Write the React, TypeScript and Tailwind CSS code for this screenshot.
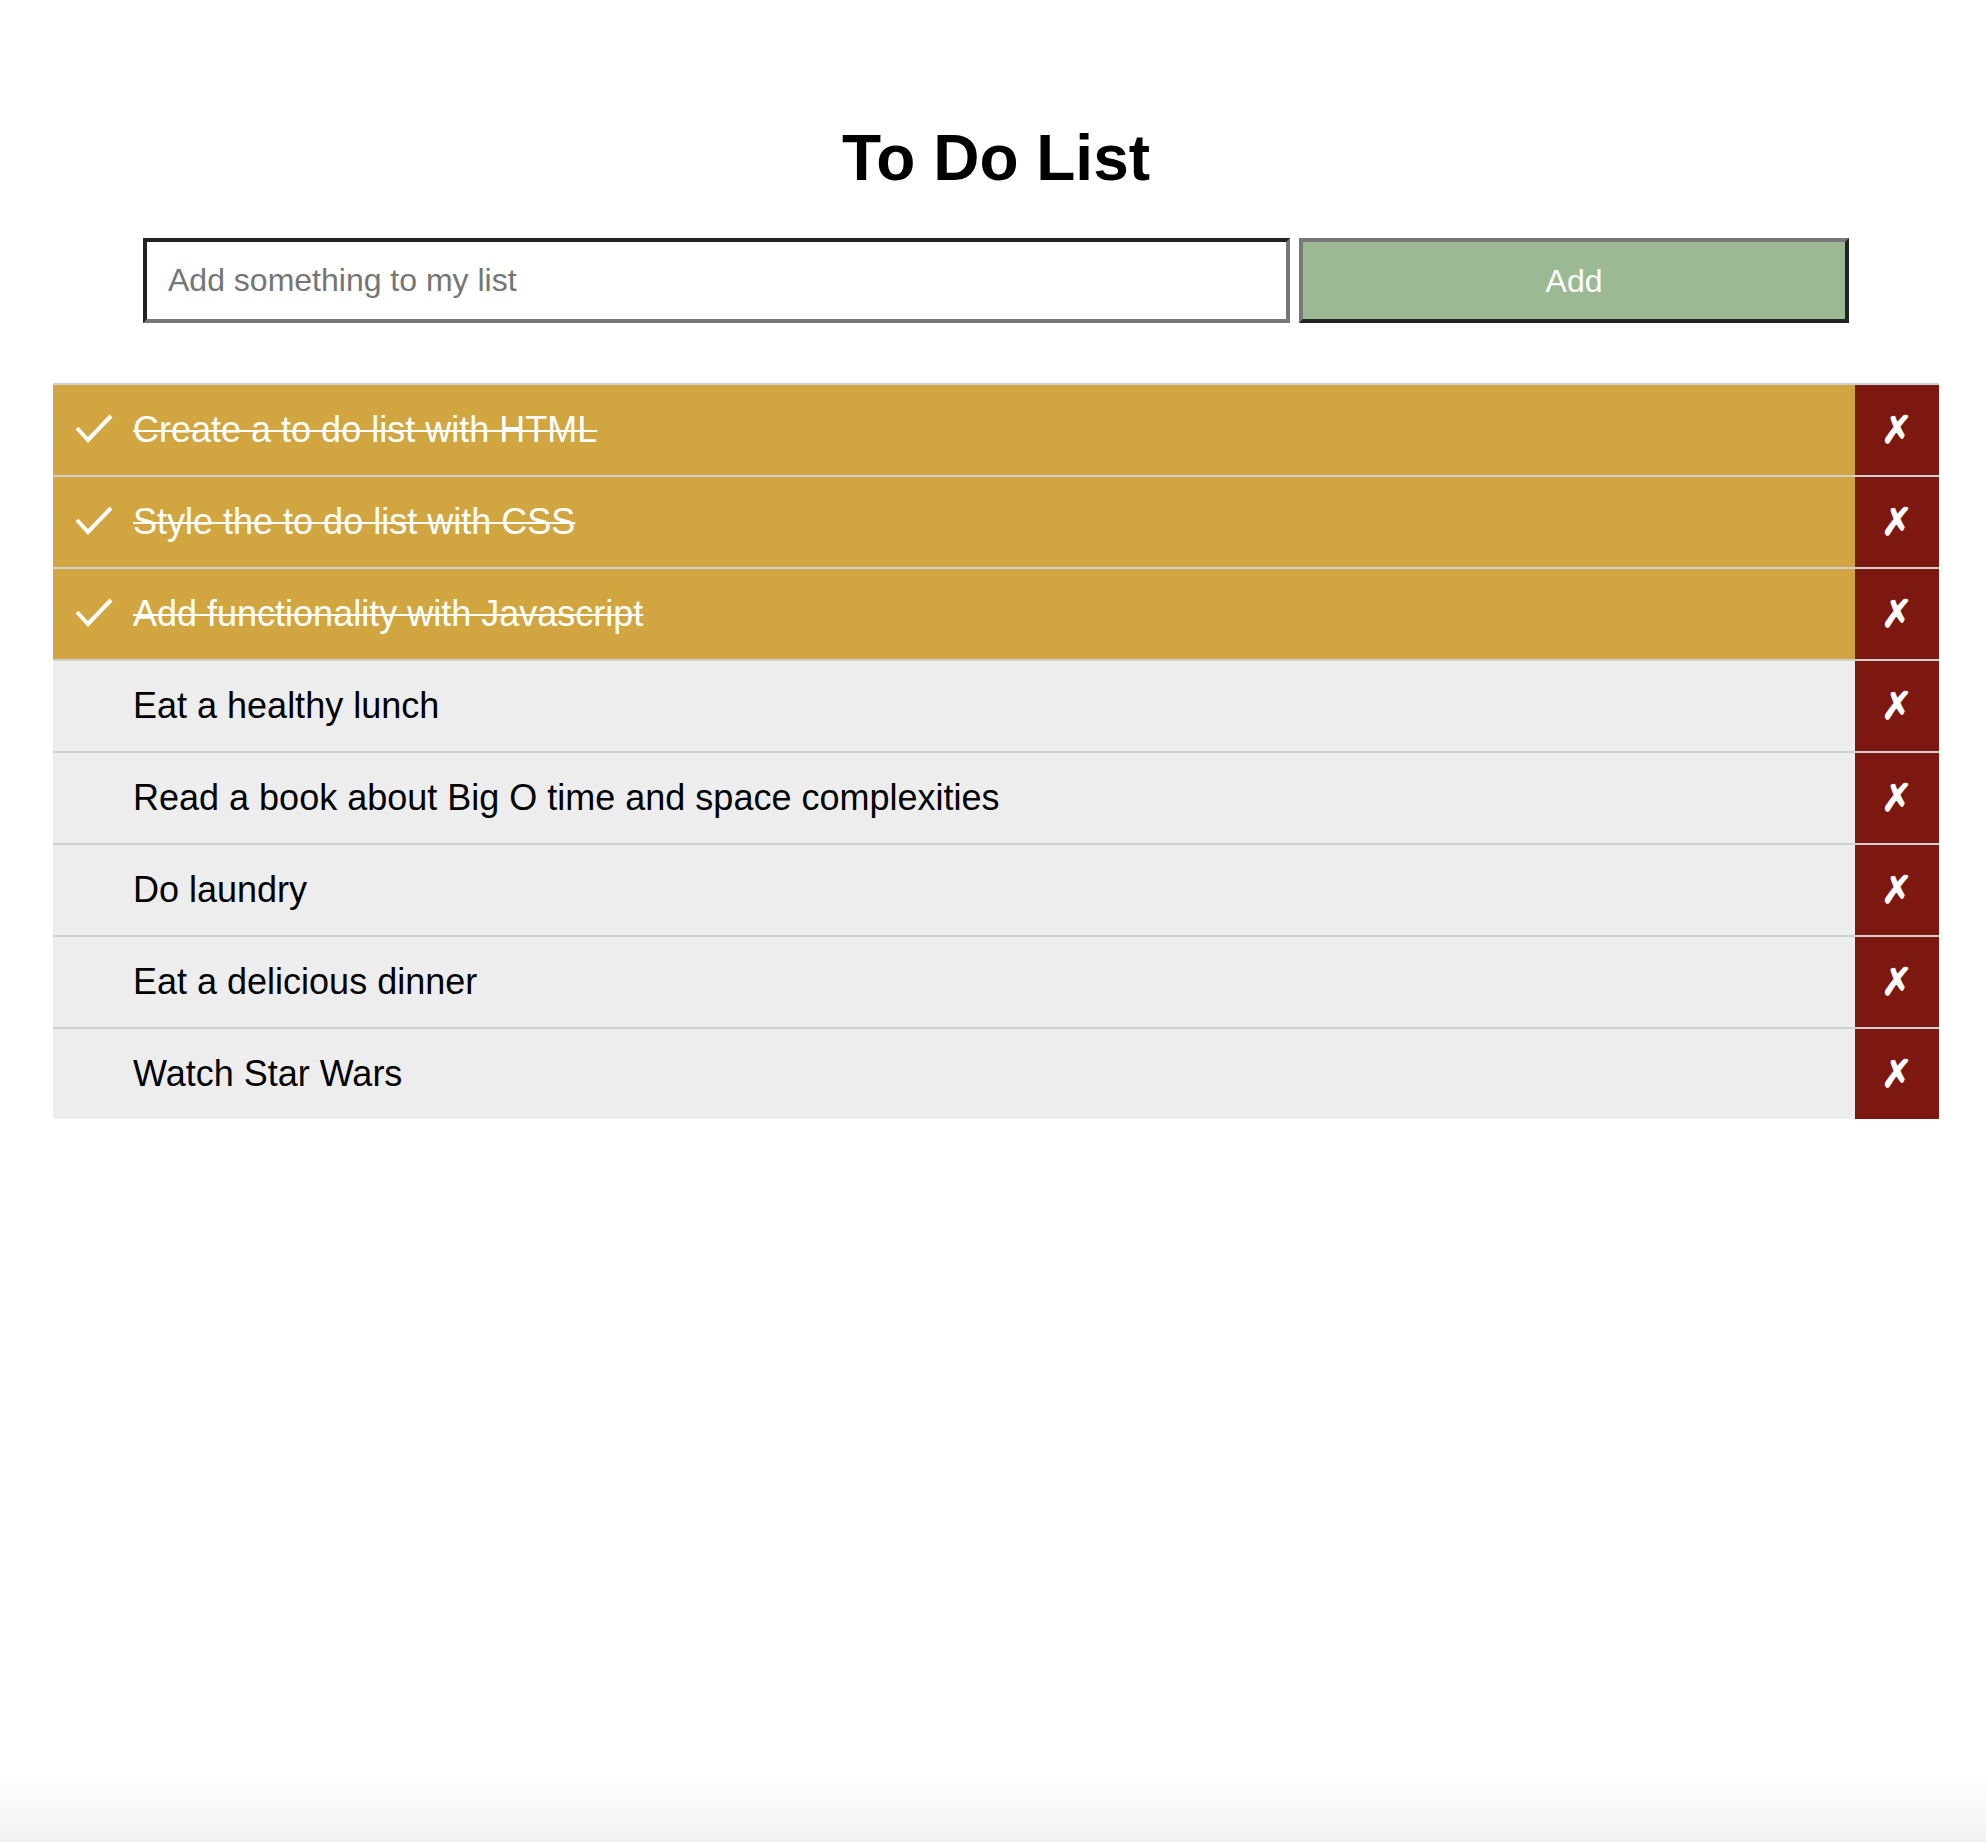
import React from "react";

type Item = { text: string; done: boolean };

const items: Item[] = [
  { text: "Create a to do list with HTML", done: true },
  { text: "Style the to do list with CSS", done: true },
  { text: "Add functionality with Javascript", done: true },
  { text: "Eat a healthy lunch", done: false },
  { text: "Read a book about Big O time and space complexities", done: false },
  { text: "Do laundry", done: false },
  { text: "Eat a delicious dinner", done: false },
  { text: "Watch Star Wars", done: false },
];

function Check() {
  return (
    <svg width="40" height="34" viewBox="0 0 40 34" className="block">
      <polyline
        points="2,15 13,27 36,3"
        fill="none"
        stroke="#ffffff"
        strokeWidth="4"
        strokeLinecap="butt"
        strokeLinejoin="miter"
      />
    </svg>
  );
}

export default function App() {
  return (
    <div className="min-h-[1842px] flex flex-col bg-white font-['Liberation_Sans',Arial,sans-serif]">
      <h1 className="pt-[122px] pl-[6px] text-center text-[64px] leading-[72px] font-bold text-black">
        To Do List
      </h1>
      <div className="mt-[44px] flex pl-[143px] gap-[9px]">
        <input
          className="box-border w-[1147px] h-[85px] border-4 border-t-[#222] border-l-[#222] border-b-[#777] border-r-[#777] bg-white px-[21px] text-[32px] text-black placeholder:text-[#757575] outline-none"
          placeholder="Add something to my list"
        />
        <button className="box-border w-[550px] h-[85px] border-4 border-t-[#777] border-l-[#777] border-b-[#222] border-r-[#222] bg-[#9bba93] text-[32px] text-white">
          Add
        </button>
      </div>
      <ul className="mt-[60px] ml-[53px] mr-[47px]">
        {items.map((it, i) => (
          <li
            key={i}
            className={
              "relative flex h-[92px] border-t-2 border-[#cfcfcf] " +
              (it.done ? "bg-[#d1a53f] text-white" : "bg-[#ededed] text-black")
            }
          >
            {it.done && (
              <span className="absolute left-[22px] top-[28px]">
                <Check />
              </span>
            )}
            <span
              className={
                "flex-1 flex items-center pl-[80px] text-[36px] leading-[42px] " +
                (it.done ? "line-through decoration-[2px]" : "")
              }
            >
              {it.text}
            </span>
            <span className="w-[84px] flex items-center justify-center bg-[#7d1810] text-white text-[38px] font-['DejaVu_Sans',sans-serif] font-bold [-webkit-text-stroke:1px_white]">
              ✗
            </span>
          </li>
        ))}
      </ul>
      <div className="flex-1" />
      <div className="h-[67px] bg-gradient-to-b from-white to-[#f2f2f2]" />
    </div>
  );
}
